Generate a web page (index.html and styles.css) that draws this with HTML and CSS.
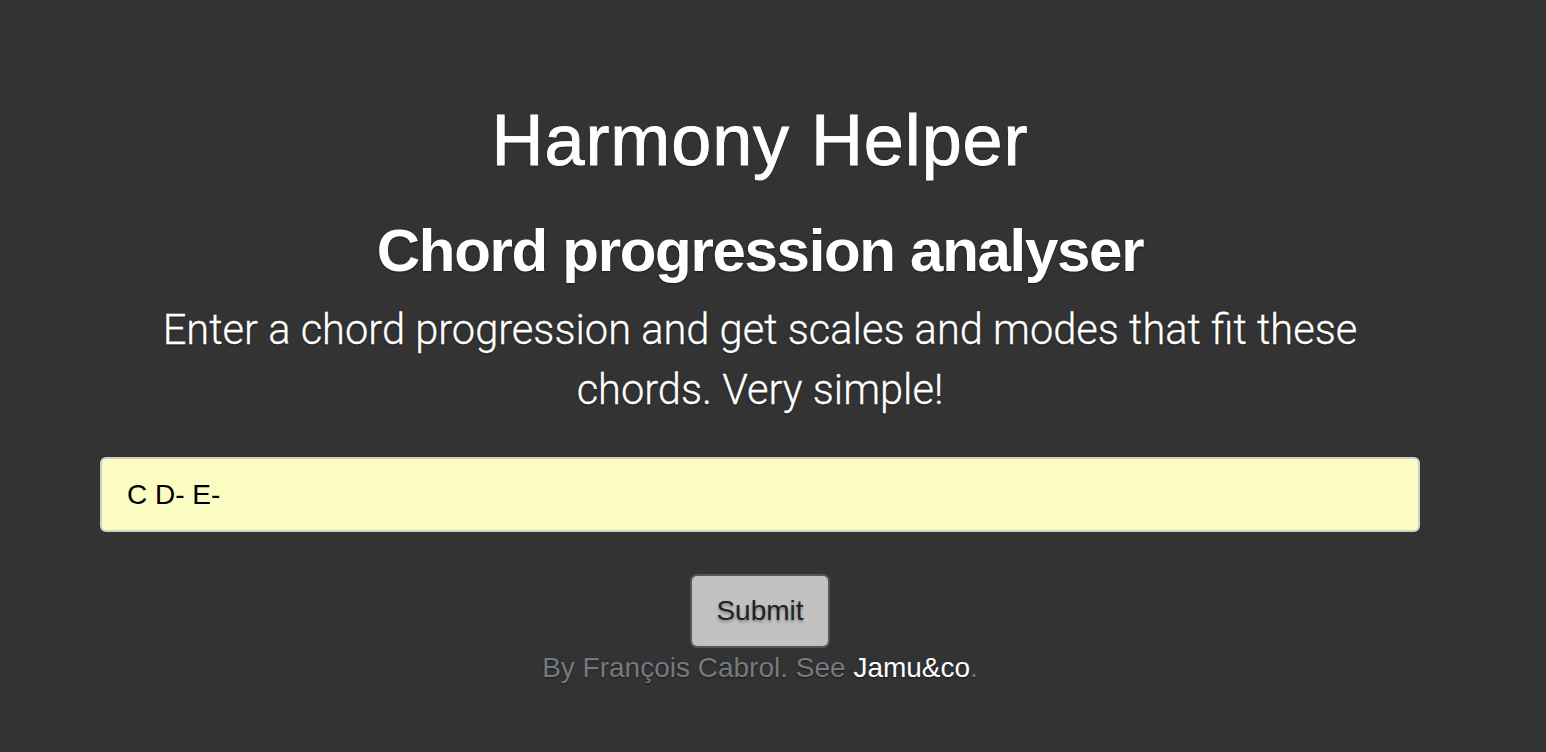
FILE: index.html
```html
<!DOCTYPE html>
<html lang="en">
<head>
<meta charset="utf-8">
<title>Harmony Helper</title>
<link rel="stylesheet" href="styles.css">
</head>
<body>
<div class="page">
  <main class="cover">
    <h1 class="title">Harmony Helper</h1>
    <h2 class="subtitle">Chord progression analyser</h2>
    <p class="lead">Enter a chord progression and get scales and modes that fit these chords. Very simple!</p>
    <form class="form">
      <input class="chords" type="text" value="C D- E-">
      <button class="submit" type="button">Submit</button>
    </form>
    <p class="credit">By François Cabrol. See <a class="credit-link" href="#">Jamu&amp;co</a>.</p>
  </main>
</div>
</body>
</html>
```
FILE: styles.css
```css
html, body {
  margin: 0;
  padding: 0;
  background: #333333;
}
body {
  font-family: "Liberation Sans", Arial, sans-serif;
  color: #ffffff;
  height: 752px;
  overflow: hidden;
}
.page {
  width: 1520px;
}
.cover {
  display: flex;
  flex-direction: column;
  align-items: center;
  padding: 97px 100px 0;
  text-shadow: 0 1px 2px rgba(0, 0, 0, 0.5);
}
.title {
  margin: 0;
  font-size: 72px;
  line-height: 86px;
  font-weight: 400;
  letter-spacing: 0.9px;
  -webkit-text-stroke: 0.9px #ffffff;
}
.subtitle {
  margin: 32px 0 0;
  font-size: 60px;
  line-height: 72px;
  font-weight: 700;
  letter-spacing: -1.3px;
}
.lead {
  margin: 13px 0 0;
  max-width: 1260px;
  text-align: center;
  font-family: Roboto, "Liberation Sans", sans-serif;
  font-weight: 300;
  font-size: 41.6px;
  line-height: 60px;
  -webkit-text-stroke: 0.3px #ffffff;
}
.form {
  align-self: stretch;
  display: flex;
  flex-direction: column;
  align-items: center;
  margin-top: 37px;
}
.chords {
  box-sizing: border-box;
  width: 100%;
  height: 75px;
  margin: 0;
  padding: 0 25px;
  border: 2px solid #cfcfc8;
  border-radius: 6px;
  background: #fafcc2;
  color: #000;
  font-family: "Liberation Sans", Arial, sans-serif;
  font-size: 28px;
  outline: none;
}
.submit {
  box-sizing: border-box;
  margin-top: 42px;
  width: 140px;
  height: 74px;
  border: 2px solid #555555;
  border-radius: 7px;
  background: #c2c2c2;
  color: #222222;
  font-family: "Liberation Sans", Arial, sans-serif;
  font-size: 28px;
  text-shadow: 0 2px 3px rgba(0, 0, 0, 0.35);
  padding: 0;
}
.credit {
  margin: 2px 0 0;
  color: #737a82;
  font-size: 28px;
  line-height: 36px;
}
.credit-link {
  color: #ffffff;
  text-decoration: none;
}
```
